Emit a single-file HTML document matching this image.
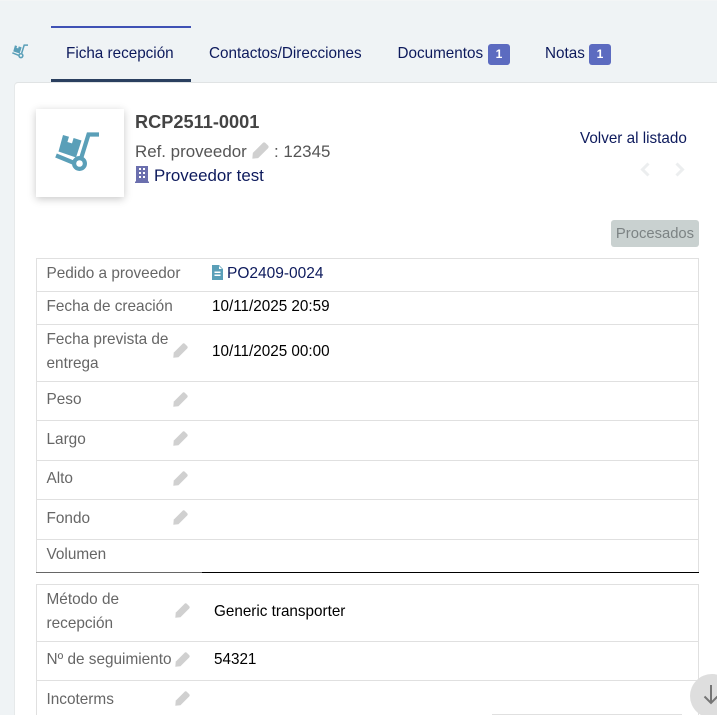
<!DOCTYPE html>
<html lang="es"><head><meta charset="utf-8"><title>Ficha recepción</title>
<style>
html,body{margin:0;padding:0;width:717px;height:715px;overflow:hidden;background:#eff3f5}
#w{position:relative;width:717px;height:715px;overflow:hidden;background:#eff3f5;font-family:"Liberation Sans",sans-serif;font-size:15.25px;color:#000}
.a{position:absolute;white-space:nowrap}
.tab{color:#0d1a5c;line-height:20px;margin-top:1px}
.l{position:absolute;white-space:nowrap;color:#666;line-height:24px;left:46.5px;font-size:15.35px;margin-top:1px}
.v{position:absolute;white-space:nowrap;color:#000;line-height:20px;margin-top:1px}
.h{position:absolute;height:1px;background:#e0e0e0}
.vl{position:absolute;width:1px;background:#e0e0e0}
.b{position:absolute;top:44px;width:22px;height:21px;background:#5c6bc0;border-radius:3px;color:#fff;font-size:12px;font-weight:bold;line-height:21px;text-align:center}
svg{position:absolute;overflow:visible}
.p{width:15px;height:15px;fill:#d0d0d0}
</style></head><body><div id="w">
<svg width="0" height="0" style="position:absolute"><defs>
<symbol id="pen" viewBox="0 0 16 16"><path d="M0.3 15.7 L0.8 10.2 L10 1 A2 2 0 0 1 12.8 1 L15 3.2 A2 2 0 0 1 15 6 L5.8 15.2 Z"/></symbol>
<symbol id="cart" viewBox="0 0 44 40"><g fill="none" stroke="#5a9fb8" stroke-width="4.2"><path d="M44 2.5 H33.5 L26.5 25"/><path d="M1 23.5 L18 30.5"/><circle cx="24.5" cy="31.5" r="5.4"/></g><path fill="#5a9fb8" d="M8 3 L14 4.8 L12.4 10 L17 11.4 L18.6 6 L26.5 8.5 L21 25.5 L3.5 19.5 Z"/></symbol>
</defs></svg>

<div class="a" style="left:0;top:0;width:717px;height:1px;background:#f3f5f6"></div>
<!-- tabs -->
<svg style="left:12px;top:44px" width="16" height="15"><use href="#cart" width="16" height="15"/></svg>
<div class="a" style="left:51px;top:26px;width:140px;height:2px;background:#3f51b5"></div>
<div class="a" style="left:51px;top:79px;width:140px;height:3px;background:#2a3f5f"></div>
<div class="a tab" style="left:66px;top:43px">Ficha recepción</div>
<div class="a tab" style="left:209px;top:43px">Contactos/Direcciones</div>
<div class="a tab" style="left:397.5px;top:43px">Documentos</div>
<div class="b" style="left:488px">1</div>
<div class="a tab" style="left:545px;top:43px">Notas</div>
<div class="b" style="left:589px">1</div>

<!-- card -->
<div class="a" style="left:14px;top:82px;width:720px;height:660px;background:#fff;border-top:1px solid #e0e3e4;border-left:1px solid #e6e9ea;border-radius:4px 0 0 0;box-sizing:border-box"></div>

<!-- header -->
<div class="a" style="left:36px;top:109px;width:88px;height:88px;background:#fff;box-shadow:0 2px 8px rgba(0,0,0,.22)"></div>
<svg style="left:55px;top:132px" width="44" height="40"><use href="#cart" width="44" height="40"/></svg>
<div class="a" style="left:135px;top:112px;font-size:18.2px;font-weight:bold;color:#444;line-height:20px">RCP2511-0001</div>
<div class="a" style="left:135px;top:142px;font-size:16.9px;color:#555;line-height:20px">Ref. proveedor</div>
<svg class="p" style="left:252px;top:142px;width:17px;height:17px"><use href="#pen" width="17" height="17"/></svg>
<div class="a" style="left:274px;top:142px;font-size:16.9px;color:#555;line-height:20px">: 12345</div>
<svg style="left:135px;top:166px" width="14" height="17"><path fill="#6b6fae" fill-rule="evenodd" d="M1 0H13V15.5H14V17H0V15.5H1ZM4 2V4H6V2ZM8 2V4H10V2ZM4 6V8H6V6ZM8 6V8H10V6ZM4 10V12H6V10ZM8 10V12H10V10Z"/></svg>
<div class="a" style="left:154px;top:166px;font-size:16.9px;color:#0d1a5c;line-height:20px">Proveedor test</div>

<div class="a" style="left:580px;top:129px;color:#0d1a5c;line-height:20px">Volver al listado</div>
<svg style="left:640px;top:162px" width="50" height="15" fill="none" stroke="#eceeef" stroke-width="3"><path d="M8.5 1.5 L2.5 7.5 L8.5 13.5"/><path d="M36.5 1.5 L42.5 7.5 L36.5 13.5"/></svg>

<div class="a" style="left:611px;top:220px;width:88px;height:27px;background:#c9d1d0;border-radius:3px;color:#7c8384;text-align:center;line-height:28px;font-size:14.8px">Procesados</div>

<!-- table 1 -->
<div class="vl" style="left:36px;top:258px;height:315px"></div>
<div class="vl" style="left:698px;top:258px;height:315px"></div>
<div class="h" style="left:36px;top:258px;width:663px"></div>
<div class="h" style="left:36px;top:291px;width:663px"></div>
<div class="h" style="left:36px;top:324px;width:663px"></div>
<div class="h" style="left:36px;top:381px;width:663px"></div>
<div class="h" style="left:36px;top:420px;width:663px"></div>
<div class="h" style="left:36px;top:460px;width:663px"></div>
<div class="h" style="left:36px;top:499px;width:663px"></div>
<div class="h" style="left:36px;top:539px;width:663px"></div>
<div class="h" style="left:36px;top:572px;width:166px;background:#666"></div>
<div class="h" style="left:202px;top:572px;width:497px;background:#000"></div>

<div class="l" style="top:261px">Pedido a proveedor</div>
<svg style="left:212px;top:265px" width="11" height="15"><path fill="#5a9fb8" fill-rule="evenodd" d="M0 0H7L11 4V15H0ZM2.5 6.5V8H8.5V6.5ZM2.5 9.5V11H8.5V9.5ZM7 1V4H10Z"/></svg>
<div class="v" style="left:227px;top:263px;color:#0d1a5c;font-size:15.5px">PO2409-0024</div>

<div class="l" style="top:294px">Fecha de creación</div>
<div class="v" style="left:212px;top:296px">10/11/2025 20:59</div>

<div class="l" style="top:327px">Fecha prevista de</div>
<div class="l" style="top:351px">entrega</div>
<svg class="p" style="left:173px;top:343px"><use href="#pen" width="15" height="15"/></svg>
<div class="v" style="left:212px;top:341px">10/11/2025 00:00</div>

<div class="l" style="top:387px">Peso</div>
<svg class="p" style="left:173px;top:392px"><use href="#pen" width="15" height="15"/></svg>
<div class="l" style="top:427px">Largo</div>
<svg class="p" style="left:173px;top:431px"><use href="#pen" width="15" height="15"/></svg>
<div class="l" style="top:466px">Alto</div>
<svg class="p" style="left:173px;top:471px"><use href="#pen" width="15" height="15"/></svg>
<div class="l" style="top:506px">Fondo</div>
<svg class="p" style="left:173px;top:510px"><use href="#pen" width="15" height="15"/></svg>
<div class="l" style="top:542px">Volumen</div>

<!-- table 2 -->
<div class="vl" style="left:36px;top:584px;height:131px"></div>
<div class="vl" style="left:698px;top:584px;height:131px"></div>
<div class="h" style="left:36px;top:584px;width:663px"></div>
<div class="h" style="left:36px;top:641px;width:663px"></div>
<div class="h" style="left:36px;top:680px;width:663px"></div>
<div class="h" style="left:492px;top:714px;width:190px"></div>

<div class="l" style="top:587px">Método de</div>
<div class="l" style="top:611px">recepción</div>
<svg class="p" style="left:175px;top:603px"><use href="#pen" width="15" height="15"/></svg>
<div class="v" style="left:214px;top:601px">Generic transporter</div>
<div class="l" style="top:647px">Nº de seguimiento</div>
<svg class="p" style="left:175px;top:652px"><use href="#pen" width="15" height="15"/></svg>
<div class="v" style="left:214px;top:649px">54321</div>
<div class="l" style="top:687px">Incoterms</div>
<svg class="p" style="left:175px;top:691px"><use href="#pen" width="15" height="15"/></svg>

<!-- scroll button -->
<div class="a" style="left:690px;top:674px;width:44px;height:44px;border-radius:50%;background:#dedede"></div>
<svg style="left:702px;top:685px" width="15" height="20" fill="none" stroke="#757575" stroke-width="2"><path d="M9 0V18"/><path d="M2.5 11.5 L9 18 L15.5 11.5"/></svg>
</div></body></html>
